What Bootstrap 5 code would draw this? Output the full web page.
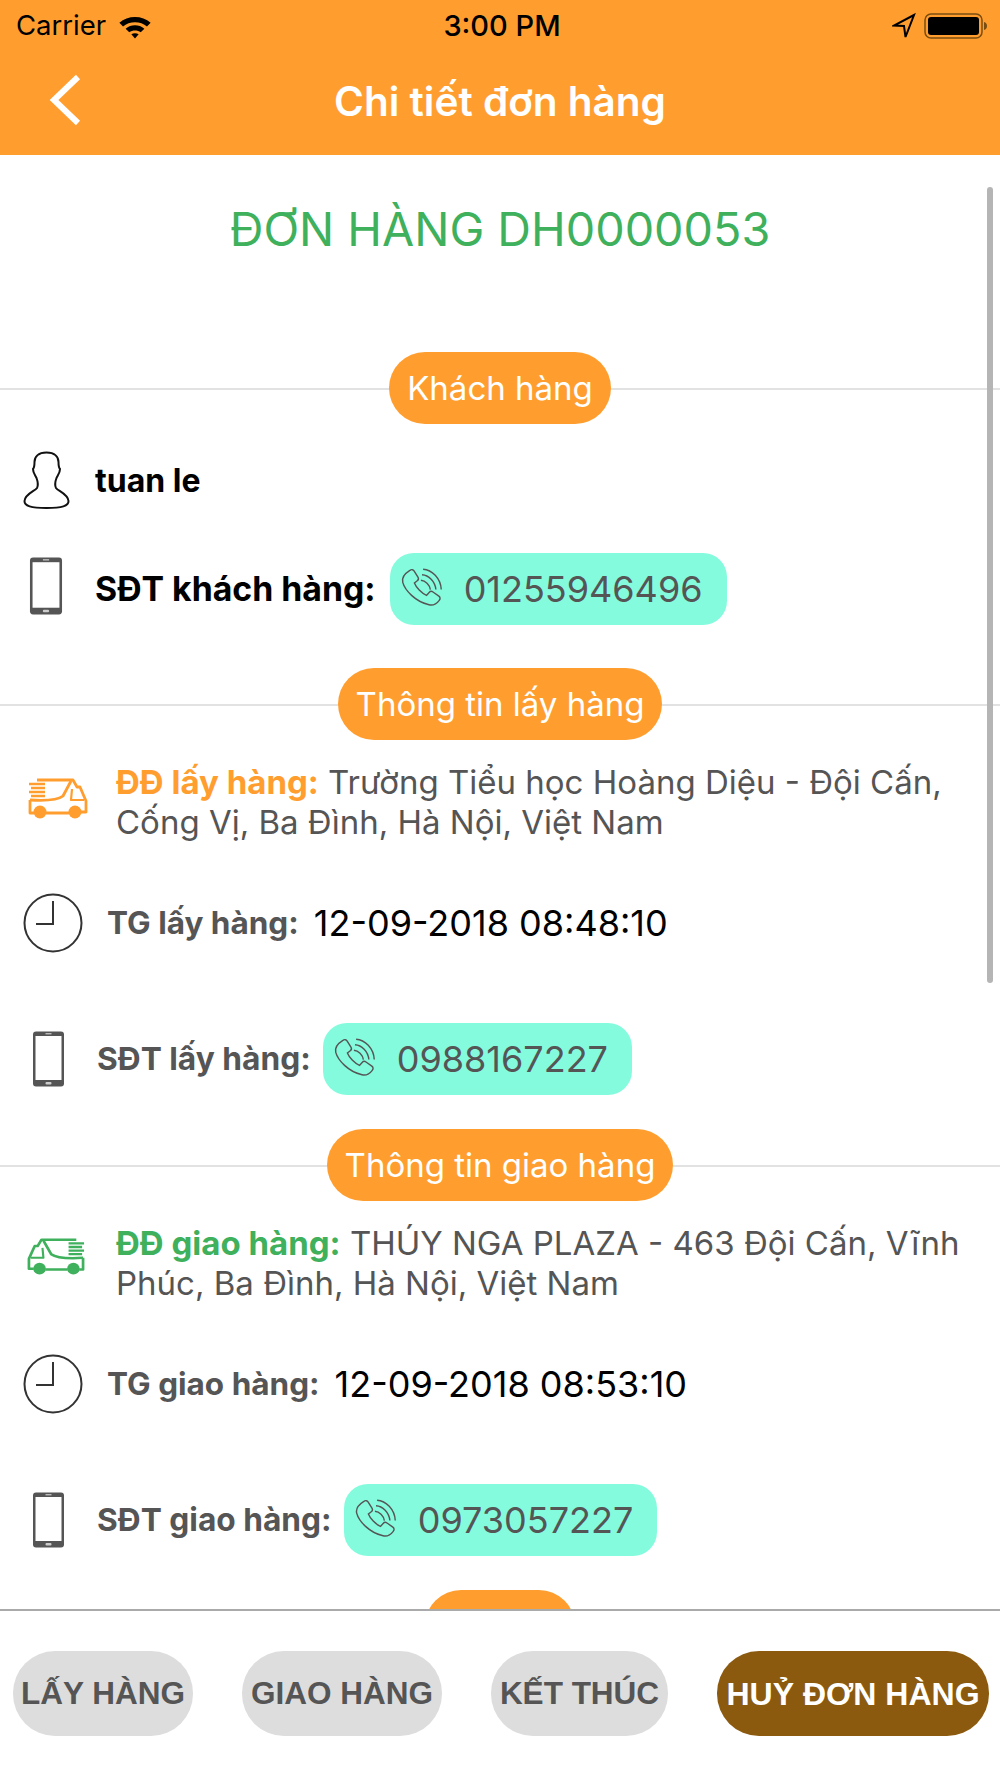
<!DOCTYPE html>
<html lang="vi">
<head>
    <meta charset="UTF-8">
    <title>Chi tiết đơn hàng</title>
    <link href="https://cdn.jsdelivr.net/npm/bootstrap@5.3.3/dist/css/bootstrap.min.css" rel="stylesheet">
    <style>
        body { width: 1000px; height: 1778px; overflow: hidden; font-family: Inter, "Noto Sans", sans-serif; color: #555; background: #fff; }
        .screen { height: 1778px; }
        .top-bar { height: 155px; background: #ff9e2f; flex: none; }
        .status-row { height: 52px; padding: 0 12px 0 16px; font-size: 27.5px; color: #000; }
        .status-side { width: 300px; }
        .status-time { font-weight: 500; font-size: 29px; }
        .nav-row { height: 103px; }
        .nav-title { font-size: 40.5px; font-weight: 600; color: #fff; margin-top: -2px; }
        .back-btn { left: 48px; top: 74px; }
        .scroll-area { height: 1454px; overflow: hidden; }
        .fake-scroll { right: 7px; top: 32px; width: 6px; height: 796px; background: #b5b5b5; border-radius: 3px; }
        .order-title { color: #3fb05c; font-size: 46.7px; line-height: 50px; padding-top: 49px; padding-bottom: 98px; text-align: center; }
        .sect-head { background: linear-gradient(#e2e2e2, #e2e2e2) center calc(50% + 1px) / 100% 2px no-repeat; }
        .sect-pill { height: 72px; padding: 2px 18px 0; background: #ff9e2f; color: #fff; font-size: 33px; border-radius: 36px; }
        .info-row { padding-left: 28px; }
        .row-name { margin-top: 27px; height: 58px; padding-left: 23px; }
        .row-cust-phone { margin-top: 43px; height: 73px; margin-bottom: 43px; }
        .strong-label { font-weight: 700; color: #000; padding-top: 2px; }
        .name-label { font-size: 32px; margin-left: 25px; }
        .cust-phone-ico { margin-top: -6px; }
        .cust-phone-label { font-size: 33.8px; margin-left: 31px; margin-right: 14px; }
        .soft-label { font-size: 31.5px; font-weight: 700; color: #555; }
        .phone-label { font-size: 31.7px; margin-left: 31px; margin-right: 12px; }
        .call-pill { height: 72px; background: #85fbde; border-radius: 24px; padding: 0 24px 0 10px; color: #555; font-size: 36px; }
        .call-pill svg { margin-right: 20px; }
        .addr-row { margin-top: 22px; padding-left: 28px; padding-right: 22px; margin-bottom: -2px; }
        .addr-text { margin-left: 28px; font-size: 33px; line-height: 40px; }
        .addr-orange { color: #ff9e2f; font-weight: 700; }
        .addr-green { color: #3fb05c; font-weight: 700; }
        .time-row { margin-top: 53px; height: 60px; padding-left: 23px; }
        .time-label { margin-left: 24px; }
        .time-value { color: #000; font-size: 36px; margin-left: 15px; }
        .phone-row { margin-top: 70px; height: 72px; padding-left: 31px; margin-bottom: 34px; }
        .clip-pill { width: 150px; height: 72px; margin-bottom: -54px; }
        .bottom-bar { height: 169px; border-top: 2px solid #aaa; padding: 40px 11px 0 13px; flex: none; }
        .act-btn { height: 85px; border-radius: 42px; border: 0; background: #ddd; color: #555; font-family: "Liberation Sans", Arial, sans-serif; font-weight: 700; font-size: 31.5px; padding: 0; }
        .act-btn.is-cancel { background: #8b5a0f; color: #fff; font-size: 32px; }
        .pickup-ico { color: #ff9e2f; margin-top: 15px; }
        .delivery-ico { color: #3fb05c; transform: scaleX(-1); margin-top: 14px; margin-left: -1px; margin-right: 3px; }
        .btn-one { width: 180px; }
        .btn-two { width: 200px; }
        .btn-three { width: 177px; }
        .btn-four { width: 272px; }
    </style>
</head>
<body>
<svg width="0" height="0" class="d-block">
    <defs>
        <symbol id="ico-phone" viewBox="0 0 34 58">
            <rect x="1.5" y="1.5" width="31" height="55" rx="3" fill="#555" />
            <rect x="4" y="6" width="26" height="44" fill="#fff" />
            <rect x="14" y="3" width="6" height="1.4" fill="#bbb" />
            <rect x="14" y="52" width="6" height="2.4" rx="1" fill="#ccc" />
        </symbol>
        <symbol id="ico-clock" viewBox="0 0 60 60">
            <circle cx="30" cy="30" r="28.5" fill="none" stroke="#333" stroke-width="2" />
            <path d="M30 8V31H13" fill="none" stroke="#333" stroke-width="2" />
        </symbol>
        <symbol id="ico-call" viewBox="0 0 40 40">
            <path d="M9 3c1.400-1 3-.7 3.900.7l3.400 5.400c.7 1.200.5 2.600-.6 3.400l-2.600 2c1.700 4.300 6.300 9.300 11 11.300l2.400-2.700c.9-1 2.300-1.200 3.500-.4l5.300 3.700c1.300.9 1.500 2.600.4 3.900-2.500 3.200-5.500 5-9.300 4C14 31.700 4.400 21 2.500 14 1.300 9.500 4.500 5.800 9 3z" fill="none" stroke="#555" stroke-width="1.300" />
            <path d="M19 12c4 .3 8 4 8.600 8.500M20 7c6 .3 12 6 12.600 13.500M21 2c8 .4 16 8.300 16.500 18.500" fill="none" stroke="#555" stroke-width="1.300" />
        </symbol>
        <symbol id="ico-truck" viewBox="0 0 60 42" preserveAspectRatio="none">
            <g fill="none" stroke="currentColor" stroke-linejoin="round">
                <path d="M9 3H45L49 10H52L58 24V35H53M18 36H41M6 36H2V23" stroke-width="2.800" />
                <path d="M43 4L35 19C30 23 18 24 2 23" stroke-width="2.800" />
                <path d="M1 7H17M3 11H17M1 15H17M3 19H17" stroke-width="2.600" />
                <path d="M44 12L43 23H56" stroke-width="2.200" />
            </g>
            <circle cx="12" cy="35" r="6.500" fill="currentColor" />
            <circle cx="47" cy="35" r="6.500" fill="currentColor" />
        </symbol>
    </defs>
</svg>

<div class="screen d-flex flex-column">
    <!-- status bar + title -->
    <header class="top-bar position-relative">
        <div class="status-row d-flex align-items-center justify-content-between">
            <div class="status-side d-flex align-items-center gap-2">
                <span>Carrier</span>
                <svg class="ms-1" width="34" height="25" viewBox="0 0 32 24">
                    <path d="M1 8.500C9 1 23 1 31 8.500L27.500 12C21.500 6.500 10.500 6.500 4.500 12zM7 14.200C12 9.800 20 9.800 25 14.200L21.500 17.600C18.500 15.200 13.500 15.200 10.500 17.600zM12.500 19.500C14.500 18 17.500 18 19.500 19.500L16 23.500z" fill="#000" />
                </svg>
            </div>
            <span class="status-time">3:00 PM</span>
            <div class="status-side d-flex align-items-center justify-content-end gap-2">
                <svg width="24" height="26" viewBox="0 0 24 26">
                    <path d="M22 2L2 12.500L12 13L13.500 24z" fill="none" stroke="#000" stroke-width="2" />
                </svg>
                <svg width="64" height="30" viewBox="0 0 64 30">
                    <rect x="1" y="3" width="57" height="24" rx="6" fill="none" stroke="#7a4d10" stroke-width="1.500" />
                    <rect x="4" y="6" width="51" height="18" rx="3" fill="#000" />
                    <path d="M60 11c2 .5 3 2 3 4s-1 3.500-3 4z" fill="#7a4d10" />
                </svg>
            </div>
        </div>
        <svg class="back-btn position-absolute" width="34" height="52" viewBox="0 0 34 52">
            <path d="M30 3L6 26L30 49" fill="none" stroke="#fff" stroke-width="6" />
        </svg>
        <div class="nav-row d-flex align-items-center justify-content-center">
            <div class="nav-title">Chi tiết đơn hàng</div>
        </div>
    </header>

    <main class="scroll-area position-relative">
        <div class="fake-scroll position-absolute"></div>
        <div class="order-title">ĐƠN HÀNG DH0000053</div>

        <!-- customer -->
        <div class="sect-head d-flex justify-content-center">
            <div class="sect-pill d-flex align-items-center">Khách hàng</div>
        </div>
        <div class="info-row row-name d-flex align-items-center">
            <svg width="47" height="58" viewBox="0 0 47 58">
                <path d="M23.500 1.500C15 1.500 11.500 6 11.500 11C11.500 15 11 17 10 18C10 22 12 24 13.500 27C15 31 15.500 34 14 37C12 40 2 43 1.500 50C1.300 55 8 57 23.500 57C39 57 45.700 55 45.500 50C45 43 35 40 33 37C31.500 34 32 31 33.500 27C35 24 37 22 37 18C36 17 35.500 15 35.500 11C35.500 6 32 1.500 23.500 1.500Z" fill="none" stroke="#111" stroke-width="2" />
            </svg>
            <span class="strong-label name-label">tuan le</span>
        </div>
        <div class="info-row row-cust-phone d-flex align-items-center">
            <svg class="cust-phone-ico" width="36" height="60"><use href="#ico-phone" /></svg>
            <span class="strong-label cust-phone-label">SĐT khách hàng:</span>
            <div class="call-pill d-flex align-items-center">
                <svg width="44" height="44"><use href="#ico-call" /></svg>
                <span>01255946496</span>
            </div>
        </div>

        <!-- pickup -->
        <div class="sect-head d-flex justify-content-center">
            <div class="sect-pill d-flex align-items-center">Thông tin lấy hàng</div>
        </div>
        <div class="addr-row d-flex text-start">
            <svg class="flex-shrink-0 pickup-ico" width="60" height="42"><use href="#ico-truck" /></svg>
            <div class="addr-text"><span class="addr-orange">ĐĐ lấy hàng:</span> Trường Tiểu học Hoàng Diệu - Đội Cấn, Cống Vị, Ba Đình, Hà Nội, Việt Nam</div>
        </div>
        <div class="time-row d-flex align-items-center">
            <svg width="60" height="60"><use href="#ico-clock" /></svg>
            <span class="soft-label time-label">TG lấy hàng:</span>
            <span class="time-value">12-09-2018 08:48:10</span>
        </div>
        <div class="phone-row d-flex align-items-center">
            <svg width="35" height="58"><use href="#ico-phone" /></svg>
            <span class="soft-label phone-label">SĐT lấy hàng:</span>
            <div class="call-pill d-flex align-items-center">
                <svg width="44" height="44"><use href="#ico-call" /></svg>
                <span>0988167227</span>
            </div>
        </div>

        <!-- delivery -->
        <div class="sect-head d-flex justify-content-center">
            <div class="sect-pill d-flex align-items-center">Thông tin giao hàng</div>
        </div>
        <div class="addr-row d-flex text-start">
            <svg class="flex-shrink-0 delivery-ico" width="58" height="38"><use href="#ico-truck" /></svg>
            <div class="addr-text"><span class="addr-green">ĐĐ giao hàng:</span> THÚY NGA PLAZA - 463 Đội Cấn, Vĩnh Phúc, Ba Đình, Hà Nội, Việt Nam</div>
        </div>
        <div class="time-row d-flex align-items-center">
            <svg width="60" height="60"><use href="#ico-clock" /></svg>
            <span class="soft-label time-label">TG giao hàng:</span>
            <span class="time-value">12-09-2018 08:53:10</span>
        </div>
        <div class="phone-row d-flex align-items-center">
            <svg width="35" height="58"><use href="#ico-phone" /></svg>
            <span class="soft-label phone-label">SĐT giao hàng:</span>
            <div class="call-pill d-flex align-items-center">
                <svg width="44" height="44"><use href="#ico-call" /></svg>
                <span>0973057227</span>
            </div>
        </div>

        <div class="d-flex justify-content-center">
            <div class="sect-pill clip-pill"></div>
        </div>
    </main>

    <!-- actions -->
    <footer class="bottom-bar d-flex justify-content-between align-items-start">
        <button type="button" class="btn act-btn btn-one">LẤY HÀNG</button>
        <button type="button" class="btn act-btn btn-two">GIAO HÀNG</button>
        <button type="button" class="btn act-btn btn-three">KẾT THÚC</button>
        <button type="button" class="btn act-btn btn-four is-cancel">HUỶ ĐƠN HÀNG</button>
    </footer>
</div>

<script src="https://cdn.jsdelivr.net/npm/bootstrap@5.3.3/dist/js/bootstrap.bundle.min.js"></script>
</body>
</html>
